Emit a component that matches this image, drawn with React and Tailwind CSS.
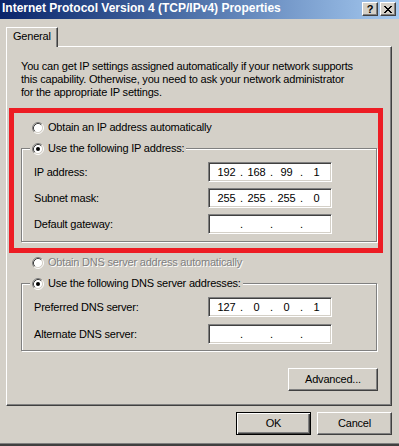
import { Fragment } from "react";

// classic win2k-style TCP/IPv4 properties dialog

const raised =
  "border border-t-white border-l-white border-r-[#404040] border-b-[#404040] shadow-[inset_-1px_-1px_0_#808080]";
const sunken =
  "border border-t-[#808080] border-l-[#808080] border-r-white border-b-white shadow-[inset_1px_1px_0_#404040,inset_-1px_-1px_0_#d4d0c8]";
const etched = "border border-[#808080] shadow-[inset_1px_1px_0_#fff,1px_1px_0_#fff]";

const Radio = ({ checked }) => (
  <svg width="12" height="12" viewBox="0 0 12 12" className="shrink-0">
    <circle cx="6" cy="6" r="4.5" fill="#fff" />
    <path d="M2.11 9.89A5.5 5.5 0 0 1 9.89 2.11" fill="none" stroke="#808080" />
    <path d="M9.89 2.11A5.5 5.5 0 0 1 2.11 9.89" fill="none" stroke="#fff" />
    <path d="M2.82 9.18A4.5 4.5 0 0 1 9.18 2.82" fill="none" stroke="#404040" />
    <path d="M9.18 2.82A4.5 4.5 0 0 1 2.82 9.18" fill="none" stroke="#d4d0c8" />
    {checked && <circle cx="6" cy="6" r="2" fill="#000" />}
  </svg>
);

const IpBox = ({ parts = ["", "", "", ""] }) => (
  <div className={`flex h-[20px] w-[124px] items-center bg-white pl-[4px] ${sunken}`}>
    {parts.map((p, i) => (
      <Fragment key={i}>
        {i > 0 && <span className="w-[3px] text-center">.</span>}
        <span className="w-[27px] text-center">{p}</span>
      </Fragment>
    ))}
  </div>
);

const Field = ({ label, parts }) => (
  <div className="flex h-[20px] items-center pl-[12px]">
    <span className="w-[174px]">{label}</span>
    <IpBox parts={parts} />
  </div>
);

const GroupHeader = ({ children }) => (
  <div className="-mt-[7px] ml-[8px] flex h-[13px] w-fit items-center gap-[4px] bg-[#d4d0c8] px-[2px]">
    <Radio checked />
    <span>{children}</span>
  </div>
);

const Button = ({ children, w, primary }) => (
  <div
    className={`flex h-[23px] items-center justify-center ${w} ${
      primary
        ? "border border-black shadow-[inset_1px_1px_0_#fff,inset_-1px_-1px_0_#404040,inset_-2px_-2px_0_#808080]"
        : raised
    }`}
  >
    {children}
  </div>
);

export default function App() {
  return (
    <div className="relative flex h-[446px] w-[399px] flex-col overflow-hidden bg-[#d4d0c8] font-['Liberation_Sans',Arial,sans-serif] text-[11px] leading-[13px] tracking-[-0.2px] text-black">
      {/* title bar */}
      <div className="flex h-[19px] shrink-0 items-start justify-between bg-linear-to-r from-[#0a246a] to-[#a6caf0] pl-[2px] pr-[3px]">
        <span className="pt-[1px] text-[12px] font-bold leading-[15px] tracking-normal text-white">
          Internet Protocol Version 4 (TCP/IPv4) Properties
        </span>
        <div className="flex gap-[2px] pt-[2px]">
          <div className={`flex h-[14px] w-[16px] items-center justify-center bg-[#d4d0c8] ${raised}`}>
            <span className="text-[11px] font-bold leading-[11px] tracking-normal">?</span>
          </div>
          <div className={`flex h-[14px] w-[16px] items-center justify-center bg-[#d4d0c8] ${raised}`}>
            <svg width="8" height="7" viewBox="0 0 8 7">
              <path
                d="M0 0h2v1H0zM6 0h2v1H6zM1 1h2v1H1zM5 1h2v1H5zM2 2h4v1H2zM3 3h2v1H3zM2 4h4v1H2zM1 5h2v1H1zM5 5h2v1H5zM0 6h2v1H0zM6 6h2v1H6z"
                fill="#000"
              />
            </svg>
          </div>
        </div>
      </div>

      {/* tab strip */}
      <div className="mt-[8px] flex pl-[6px]">
        <div className="relative z-10 -mb-px h-[20px] w-[52px] border-l border-r border-t border-l-white border-r-[#404040] border-t-white bg-[#d4d0c8] pl-[6px] pt-[2px] shadow-[inset_-1px_0_0_#808080]">
          General
        </div>
      </div>

      {/* tab panel */}
      <div className={`ml-[6px] h-[360px] w-[386px] shrink-0 ${raised}`}>
        <p className="ml-[14px] mt-[13px] whitespace-nowrap">
          You can get IP settings assigned automatically if your network supports
          <br />
          this capability. Otherwise, you need to ask your network administrator
          <br />
          for the appropriate IP settings.
        </p>

        <div className="ml-[25px] mt-[22px] flex h-[13px] items-center gap-[4px]">
          <Radio />
          <span>Obtain an IP address automatically</span>
        </div>

        <div className={`ml-[14px] mt-[14px] w-[356px] ${etched}`}>
          <GroupHeader>Use the following IP address:</GroupHeader>
          <div className="mt-[7px] flex flex-col gap-[6px] pb-[7px]">
            <Field label="IP address:" parts={["192", "168", "99", "1"]} />
            <Field label="Subnet mask:" parts={["255", "255", "255", "0"]} />
            <Field label="Default gateway:" />
          </div>
        </div>

        <div className="ml-[25px] mt-[14px] flex h-[13px] items-center gap-[4px]">
          <Radio />
          <span className="text-[#808080] [text-shadow:1px_1px_0_#fff]">
            Obtain DNS server address automatically
          </span>
        </div>

        <div className={`ml-[14px] mt-[14px] w-[356px] ${etched}`}>
          <GroupHeader>Use the following DNS server addresses:</GroupHeader>
          <div className="mt-[7px] flex flex-col gap-[7px] pb-[6px]">
            <Field label="Preferred DNS server:" parts={["127", "0", "0", "1"]} />
            <Field label="Alternate DNS server:" />
          </div>
        </div>

        <div className="ml-[281px] mt-[17px]">
          <Button w="w-[90px]">Advanced...</Button>
        </div>
      </div>

      {/* dialog buttons */}
      <div className="mt-[6px] flex justify-end gap-[6px] pr-[7px]">
        <Button w="w-[75px]" primary>
          OK
        </Button>
        <Button w="w-[75px]">Cancel</Button>
      </div>

      <div className="mt-auto h-[3px] border-t border-[#808080] bg-[#404040]" />

      {/* red annotation box */}
      <div className="pointer-events-none absolute left-[9px] top-[108px] h-[145px] w-[374px] border-[5px] border-[#ed1c24]" />
    </div>
  );
}
